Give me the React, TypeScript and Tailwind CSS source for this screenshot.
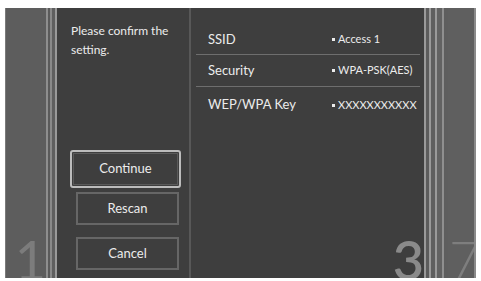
export default function App() {
  const rows = [
    { label: "SSID", value: "Access 1", cls: "h-[47px] pt-[17px] border-b border-[#6e6e6e]" },
    { label: "Security", value: "WPA-PSK(AES)", cls: "h-[32px] border-b border-[#6e6e6e]" },
    { label: "WEP/WPA Key", value: "XXXXXXXXXXX", cls: "h-[36px]" },
  ];

  return (
    <div className="w-[481px] h-[281px] bg-white pt-[8px] pl-[5px] pr-[5px] pb-[3px] font-['Lato',sans-serif] overflow-hidden">
      <div className="flex h-[270px] w-[471px] overflow-hidden">
        {/* left edge strip */}
        <div className="relative w-[41px] bg-[#5d5d5d] border-l border-[#7a7a7a] overflow-hidden">
          <span className="absolute right-[0px] bottom-[-9px] text-[54px] leading-none text-[#7c7c7c]">1</span>
        </div>
        <div className="flex w-[11px]">
          <div className="w-[2px] bg-[#8e8e8e]" />
          <div className="w-[2px] bg-[#5a5a5a]" />
          <div className="w-[2px] bg-[#8a8a8a]" />
          <div className="w-[3px] bg-[#5f5f5f]" />
          <div className="w-[2px] bg-[#9a9a9a]" />
        </div>

        {/* dialog panel */}
        <div className="flex w-[367px] bg-[#3e3e3e] text-[#ececec]">
          <div className="flex w-[132px] flex-col">
            <p className="pl-[14px] pt-[13px] text-[12px] leading-[19px]">
              Please confirm the
              <br />
              setting.
            </p>
            <div className="mt-[91px] ml-[13px] flex h-[38px] w-[111px] items-center justify-center rounded-[3px] border-2 border-[#bcbcbc] p-[1px]">
              <div className="flex h-full w-full items-center justify-center border border-[#5a5a5a] text-[13px]">Continue</div>
            </div>
            <div className="mt-[4px] ml-[19px] flex h-[33px] w-[103px] items-center justify-center border-2 border-[#666] text-[13px]">Rescan</div>
            <div className="mt-[12px] ml-[19px] flex h-[33px] w-[103px] items-center justify-center border-2 border-[#666] text-[13px]">Cancel</div>
          </div>
          <div className="w-[2px] bg-[#585858]" />
          <div className="relative flex-1 pl-[5px] pr-[4px]">
            {rows.map((r) => (
              <div key={r.label} className={`flex items-center ${r.cls}`}>
                <span className="w-[136px] pl-[12px] text-[13px]">{r.label}</span>
                <span className="flex items-center gap-[3px] text-[11px] whitespace-nowrap">
                  <span className="h-[3px] w-[3px] bg-[#ececec]" />
                  {r.value}
                </span>
              </div>
            ))}
            <span className="absolute right-[0px] bottom-[-9px] text-[54px] leading-none text-[#8a8a8a] font-semibold">3</span>
          </div>
        </div>

        {/* right edge strip */}
        <div className="flex w-[24px]">
          <div className="w-[2px] bg-[#9a9a9a]" />
          <div className="w-[3px] bg-[#5c5c5c]" />
          <div className="w-[2px] bg-[#9a9a9a]" />
          <div className="w-[4px] bg-[#5f5f5f]" />
          <div className="w-[2px] bg-[#9a9a9a]" />
          <div className="w-[5px] bg-[#626262]" />
          <div className="w-[2px] bg-[#8f8f8f]" />
          <div className="w-[4px] bg-[#5e5e5e]" />
        </div>
        <div className="relative flex-1 bg-[#5f5f5f] overflow-hidden border-r-2 border-[#8a8a8a]">
          <span className="absolute left-[1px] bottom-[-9px] text-[54px] leading-none text-[#7e7e7e] font-light">7</span>
        </div>
      </div>
    </div>
  );
}
